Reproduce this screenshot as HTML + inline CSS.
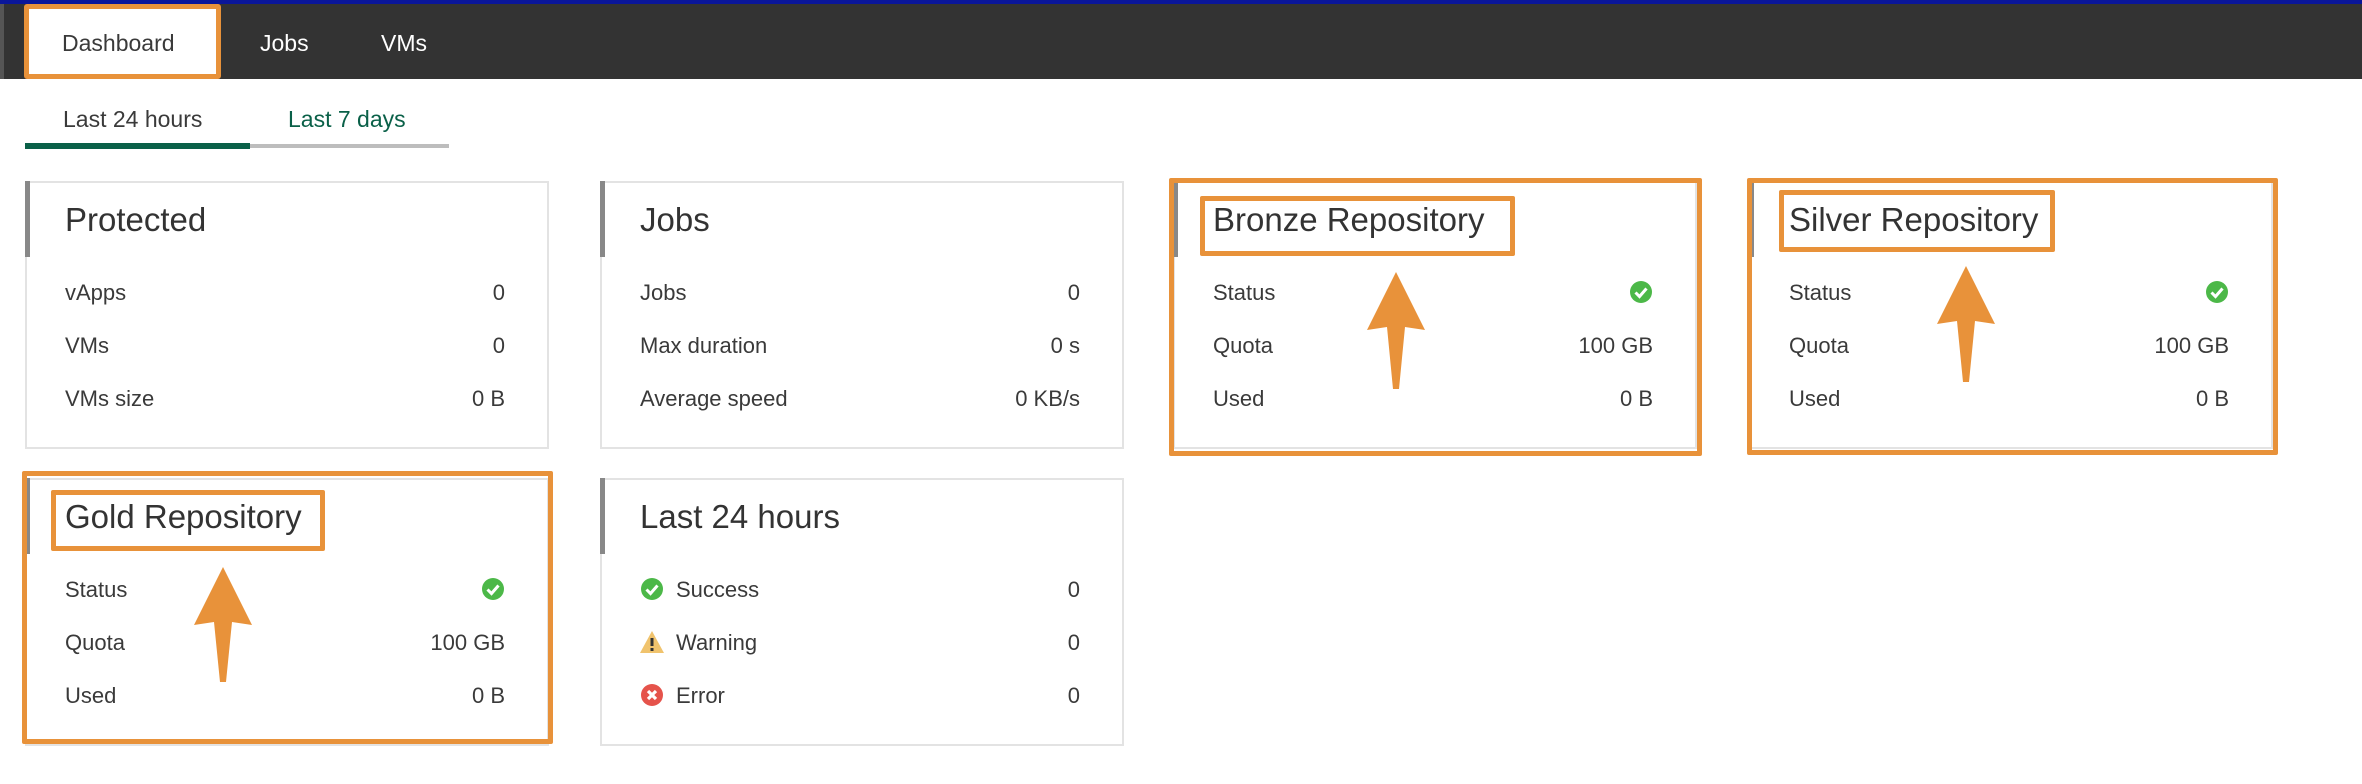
<!DOCTYPE html>
<html><head><meta charset="utf-8">
<style>
*{margin:0;padding:0;box-sizing:border-box}
body{width:2362px;height:784px;background:#fff;position:relative;overflow:hidden;font-family:"Liberation Sans",sans-serif;color:#3a3a3a}
.abs{position:absolute}
.nav{left:0;top:0;width:2362px;height:79px;background:#333;border-top:4px solid #0a169a}
.navt{position:absolute;font-size:23px;color:#fff;top:30px}
.card{position:absolute;width:524px;height:268px;border:2px solid #e3e3e3;background:#fff}
.card .bar{position:absolute;left:-2px;top:-2px;width:5px;height:76px;background:#888}
.card h2{position:absolute;left:38px;top:18px;font-weight:normal;font-size:33px;color:#333}
.row{position:absolute;left:38px;right:42px;font-size:22px;color:#3a3a3a;height:30px}
.row .v{position:absolute;right:0;top:0}
.ob{position:absolute;border:5px solid #e8923a;border-radius:2px}
</style></head><body>
<div class="abs nav"></div>
<div class="abs" style="left:0;top:4px;width:4px;height:75px;background:#555"></div>
<div class="abs" style="left:24px;top:4px;width:197px;height:75px;background:#fff;border:5px solid #e8923a;border-radius:3px"></div>
<div class="navt" style="left:62px;color:#3a3a3a">Dashboard</div>
<div class="navt" style="left:260px">Jobs</div>
<div class="navt" style="left:381px">VMs</div>

<div class="abs" style="left:63px;top:106px;font-size:23px;color:#3a3a3a">Last 24 hours</div>
<div class="abs" style="left:288px;top:106px;font-size:23px;color:#0a6048">Last 7 days</div>
<div class="abs" style="left:25px;top:143px;width:225px;height:6px;background:#0a6048"></div>
<div class="abs" style="left:250px;top:144px;width:199px;height:4px;background:#bdbdbd"></div>

<!-- Protected -->
<div class="card" style="left:25px;top:181px"><div class="bar"></div><h2>Protected</h2>
<div class="row" style="top:97px">vApps<span class="v">0</span></div>
<div class="row" style="top:150px">VMs<span class="v">0</span></div>
<div class="row" style="top:203px">VMs size<span class="v">0 B</span></div></div>
<!-- Jobs -->
<div class="card" style="left:600px;top:181px"><div class="bar"></div><h2>Jobs</h2>
<div class="row" style="top:97px">Jobs<span class="v">0</span></div>
<div class="row" style="top:150px">Max duration<span class="v">0 s</span></div>
<div class="row" style="top:203px">Average speed<span class="v">0 KB/s</span></div></div>
<!-- Bronze -->
<div class="card" style="left:1173px;top:181px"><div class="bar"></div><h2>Bronze Repository</h2>
<div class="row" style="top:97px">Status<span class="v"><svg width="24" height="24" viewBox="0 0 24 24"><circle cx="12" cy="12" r="11" fill="#4cb848"/><path d="M6.5 12.5l4 4 7-8" stroke="#fff" stroke-width="3" fill="none"/></svg></span></div>
<div class="row" style="top:150px">Quota<span class="v">100 GB</span></div>
<div class="row" style="top:203px">Used<span class="v">0 B</span></div></div>
<!-- Silver -->
<div class="card" style="left:1749px;top:181px"><div class="bar"></div><h2>Silver Repository</h2>
<div class="row" style="top:97px">Status<span class="v"><svg width="24" height="24" viewBox="0 0 24 24"><circle cx="12" cy="12" r="11" fill="#4cb848"/><path d="M6.5 12.5l4 4 7-8" stroke="#fff" stroke-width="3" fill="none"/></svg></span></div>
<div class="row" style="top:150px">Quota<span class="v">100 GB</span></div>
<div class="row" style="top:203px">Used<span class="v">0 B</span></div></div>
<!-- Gold -->
<div class="card" style="left:25px;top:478px"><div class="bar"></div><h2>Gold Repository</h2>
<div class="row" style="top:97px">Status<span class="v"><svg width="24" height="24" viewBox="0 0 24 24"><circle cx="12" cy="12" r="11" fill="#4cb848"/><path d="M6.5 12.5l4 4 7-8" stroke="#fff" stroke-width="3" fill="none"/></svg></span></div>
<div class="row" style="top:150px">Quota<span class="v">100 GB</span></div>
<div class="row" style="top:203px">Used<span class="v">0 B</span></div></div>
<!-- Last 24 -->
<div class="card" style="left:600px;top:478px"><div class="bar"></div><h2>Last 24 hours</h2>
<div class="row" style="top:97px"><svg style="position:absolute;left:0;top:0px" width="24" height="24" viewBox="0 0 24 24"><circle cx="12" cy="12" r="11" fill="#4cb848"/><path d="M6.5 12.5l4 4 7-8" stroke="#fff" stroke-width="3" fill="none"/></svg><span style="margin-left:36px">Success</span><span class="v">0</span></div>
<div class="row" style="top:150px"><svg style="position:absolute;left:-1px;top:0px" width="26" height="24" viewBox="0 0 26 24"><path d="M13 1L25 23H1Z" fill="#f0c36d"/><rect x="11.5" y="8" width="3" height="8" fill="#333"/><rect x="11.5" y="18" width="3" height="3" fill="#333"/></svg><span style="margin-left:36px">Warning</span><span class="v">0</span></div>
<div class="row" style="top:203px"><svg style="position:absolute;left:0;top:0px" width="24" height="24" viewBox="0 0 24 24"><circle cx="12" cy="12" r="11" fill="#e5534b"/><path d="M8 8l8 8M16 8l-8 8" stroke="#fff" stroke-width="3.2"/></svg><span style="margin-left:36px">Error</span><span class="v">0</span></div></div>

<!-- annotations -->
<div class="ob" style="left:1169px;top:178px;width:533px;height:278px"></div>
<div class="ob" style="left:1200px;top:196px;width:315px;height:60px"></div>
<div class="ob" style="left:1747px;top:178px;width:531px;height:277px"></div>
<div class="ob" style="left:1779px;top:190px;width:276px;height:62px"></div>
<div class="ob" style="left:22px;top:471px;width:531px;height:273px"></div>
<div class="ob" style="left:51px;top:490px;width:274px;height:61px"></div>
<svg class="abs" style="left:0;top:0" width="2362" height="784">
<g fill="#e8923a">
<path transform="translate(1396,272)" d="M0 0L29 58L9 55L3 117L-3 117L-9 55L-29 58Z"/>
<path transform="translate(1966,266)" d="M0 0L29 58L9 55L3 116L-3 116L-9 55L-29 58Z"/>
<path transform="translate(223,567)" d="M0 0L29 58L9 55L3 115L-3 115L-9 55L-29 58Z"/>
</g></svg>
</body></html>
